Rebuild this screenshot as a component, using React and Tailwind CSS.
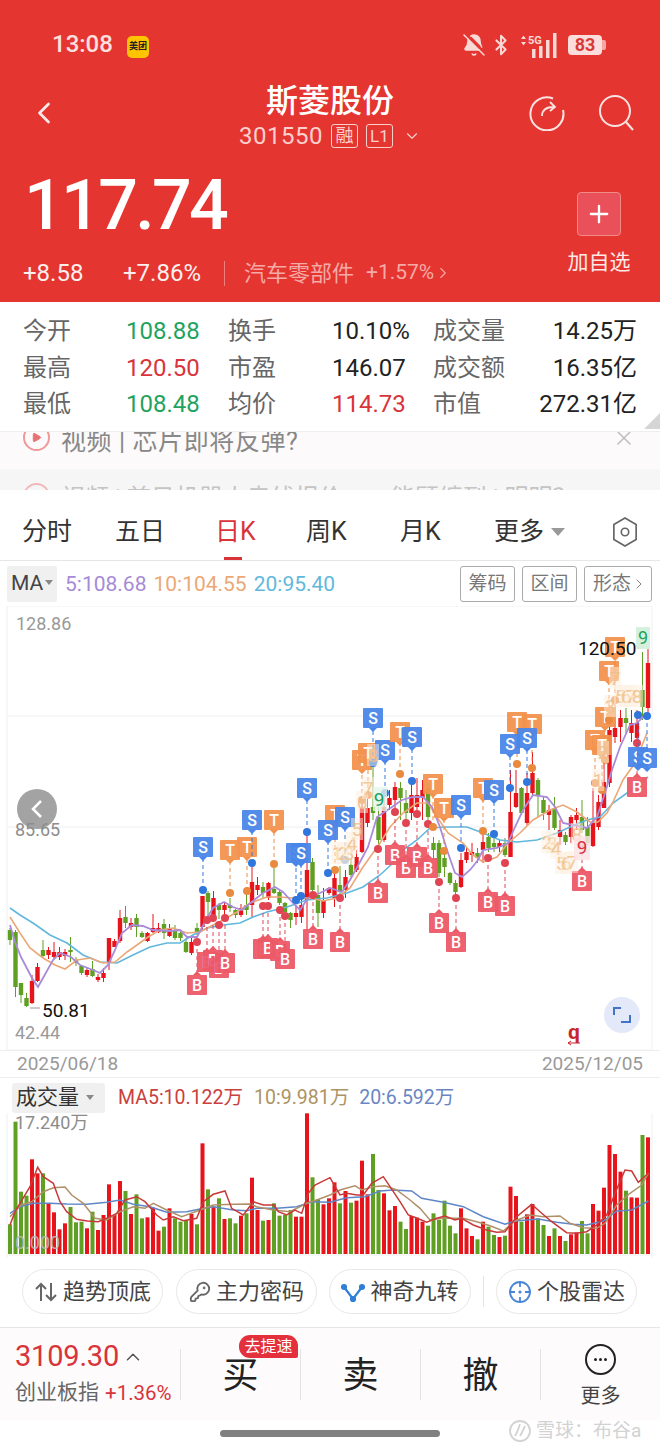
import { BellOff, Bluetooth, ChevronDown, ChevronLeft, ChevronRight, ChevronUp, KeyRound, Plus, Play, X } from "lucide-react";

const RED = "#e8141c";
const GREEN = "#5f9f22";

// bar colours, shared by candles and volume
const colors =
  "ggggrrgrrr" + "rgggrgrrrr" + "rgrggrrrgr" + "gggrgrgrgr" + "ggrgrrgrgg" + "ggrrrggrrr" + "grgrrrggrr" + "rggrrrgggg" + "ggrrrgrggr" + "grrgrrggrg" + "rgrrggrrrr" + "rrgrrgr";

const volTops = [
  358, 50, 260, 272, 163, 205, 205, 295, 322, 373, 355, 306, 352, 350, 370, 320, 375, 330, 238, 330, 228, 258, 327, 268, 340, 337, 308, 377, 365, 310,
  340, 350, 345, 327, 358, 115, 253, 305, 280, 342, 340, 355, 332, 325, 218, 315, 347, 345, 295, 332, 330, 315, 335, 335, 25, 217, 283, 298, 280, 232,
  295, 258, 293, 287, 167, 268, 147, 255, 265, 316, 303, 350, 372, 333, 338, 350, 362, 325, 345, 287, 362, 385, 310, 370, 393, 403, 350, 365, 390, 396,
  392, 245, 273, 350, 328, 297, 340, 360, 393, 370, 393, 408, 388, 382, 348, 385, 297, 317, 248, 120, 147, 200, 257, 277, 278, 90, 97,
];

// body top, body bottom, high, low
const candles = [
  [930, 940, 928, 945], [932, 987, 930, 997], [983, 995, 983, 1003], [998, 1006, 993, 1007], [981, 1003, 975, 1004], [967, 981, 963, 982],
  [950, 956, 940, 957], [950, 955, 947, 959], [952, 957, 942, 959], [952, 957, 947, 960], [952, 956, 949, 960], [950, 952, 937, 962],
  [960, 963, 957, 966], [966, 973, 966, 975], [970, 975, 968, 977], [969, 976, 961, 977], [977, 980, 974, 982], [973, 978, 968, 982],
  [938, 963, 938, 970], [941, 947, 939, 947], [918, 941, 910, 943], [917, 923, 906, 928], [923, 927, 918, 930], [918, 927, 914, 937],
  [933, 937, 931, 938], [933, 941, 932, 942], [928, 932, 914, 933], [928, 932, 923, 933], [924, 933, 919, 939], [928, 936, 924, 937],
  [930, 938, 925, 940], [933, 938, 930, 941], [942, 952, 938, 953], [942, 953, 935, 955], [928, 933, 923, 935], [896, 927, 896, 930],
  [893, 902, 891, 917], [898, 918, 891, 920], [905, 910, 903, 919], [905, 910, 902, 920], [905, 908, 898, 912], [910, 915, 909, 918],
  [908, 915, 904, 917], [905, 910, 887, 915], [882, 905, 865, 917], [885, 890, 877, 895], [887, 893, 882, 898], [883, 898, 882, 900],
  [889, 893, 868, 894], [892, 903, 890, 905], [903, 912, 902, 913], [913, 920, 912, 928], [913, 917, 905, 925], [905, 917, 898, 923],
  [870, 900, 835, 930], [862, 890, 858, 893], [895, 913, 885, 927], [900, 913, 888, 918], [888, 893, 887, 895], [878, 898, 867, 907],
  [885, 892, 866, 895], [877, 890, 870, 898], [865, 875, 858, 877], [857, 870, 850, 872], [808, 852, 800, 853], [808, 823, 797, 827],
  [807, 813, 763, 820], [817, 840, 807, 850], [807, 840, 790, 842], [798, 805, 790, 810], [787, 800, 782, 813], [788, 798, 782, 820],
  [803, 813, 790, 820], [795, 813, 778, 820], [795, 807, 778, 812], [790, 798, 780, 820], [788, 817, 783, 827], [843, 850, 837, 860],
  [843, 873, 840, 877], [858, 867, 850, 877], [873, 883, 872, 885], [883, 892, 880, 895], [860, 887, 853, 888], [852, 860, 848, 863],
  [852, 855, 843, 862], [853, 858, 848, 863], [842, 850, 833, 863], [837, 848, 833, 852], [843, 847, 838, 852], [843, 847, 840, 852],
  [843, 855, 838, 857], [812, 857, 770, 857], [793, 807, 770, 808], [788, 813, 787, 815], [793, 823, 773, 825], [773, 793, 752, 795],
  [780, 795, 778, 817], [800, 813, 797, 820], [810, 815, 805, 830], [808, 828, 797, 830], [830, 837, 820, 845], [835, 842, 832, 845],
  [817, 837, 815, 843], [815, 820, 808, 830], [817, 830, 800, 833], [827, 843, 817, 845], [823, 846, 788, 847], [802, 827, 795, 830],
  [782, 808, 762, 808], [730, 783, 720, 787], [728, 737, 697, 743], [718, 727, 710, 742], [718, 723, 708, 733], [723, 733, 710, 742],
  [723, 738, 710, 747], [690, 707, 652, 720], [663, 708, 648, 717],
];

const ma5 =
  "10,925 15,942 21,957 32,978 38,987 43,978 53,960 60,953 71,957 80,965 93,970 100,973 108,965 115,950 122,933 132,925 143,926 153,930 170,931 180,930 187,937 197,937 207,918 213,908 224,902 233,907 242,910 248,905 263,893 275,887 283,892 293,903 300,910 308,898 320,893 330,888 342,892 350,880 360,862 368,847 377,817 392,807 402,800 413,797 423,797 432,807 440,827 447,850 455,873 462,877 470,870 478,860 483,850 497,848 508,843 515,827 523,810 533,795 547,797 555,807 563,823 573,825 587,828 597,817 605,793 612,770 620,747 630,725 637,723 645,715";
const ma10 =
  "10,917 20,933 30,948 43,958 55,965 65,969 77,960 90,958 103,963 115,962 127,952 137,945 148,937 160,930 173,928 187,933 200,932 213,925 223,920 237,912 250,903 267,897 280,897 293,898 310,898 323,901 337,898 350,888 363,867 380,843 390,827 403,813 417,803 428,803 437,817 448,833 463,843 473,855 483,862 497,857 508,843 520,833 533,820 550,810 563,805 577,812 590,822 598,822 607,813 613,802 623,780 635,763 647,733";
const ma20 =
  "10,908 20,915 33,923 50,935 67,943 83,955 100,962 117,963 133,955 150,947 167,943 180,943 193,935 207,928 223,925 240,923 253,917 267,912 287,907 307,900 327,898 347,893 363,887 380,875 393,863 403,850 417,840 430,828 445,827 467,827 483,833 500,840 517,842 537,840 557,833 570,827 587,820 600,817 613,803 627,793 648,777";

const markers = [
  ["B", 197, 985, 942], ["B", 207, 962, 920], ["B", 213, 960, 918], ["B", 219, 968, 925], ["B", 225, 963, 918],
  ["B", 263, 949, 906], ["B", 268, 948, 906], ["B", 280, 951, 910], ["B", 285, 959, 916], ["B", 313, 939, 895], ["B", 340, 942, 898],
  ["B", 378, 893, 849], ["B", 395, 855, 812], ["B", 406, 868, 823], ["B", 417, 857, 814], ["B", 428, 868, 824], ["B", 439, 923, 882],
  ["B", 456, 942, 898], ["B", 488, 902, 858], ["B", 505, 906, 863], ["B", 582, 881, 845], ["B", 637, 787, 743],
  ["S", 203, 847, 890], ["T", 230, 850, 893], ["T", 247, 847, 891], ["S", 252, 820, 863], ["T", 274, 820, 864], ["S", 307, 788, 832],
  ["S", 296, 853, 900], ["S", 301, 853, 896], ["T", 335, 815, 870], ["S", 328, 830, 873], ["S", 345, 817, 860],
  ["T", 362, 760, 800], ["T", 368, 753, 795], ["S", 373, 718, 763], ["S", 385, 750, 793], ["T", 400, 732, 774], ["S", 412, 737, 781],
  ["T", 433, 784, 827], ["T", 444, 808, 851], ["S", 461, 805, 848], ["T", 483, 788, 831], ["S", 494, 790, 834],
  ["T", 517, 722, 764], ["T", 532, 724, 768], ["S", 510, 744, 788], ["S", 527, 738, 782],
  ["T", 595, 740, 783], ["T", 602, 745, 790], ["T", 605, 717, 760], ["T", 609, 671, 720], ["T", 615, 647, 700],
  ["S", 638, 757, 715], ["S", 647, 758, 716],
];

const tagColors = {
  S: { fill: "#4a86e8", dot: "#2f76dd" },
  T: { fill: "#f2924d", dot: "#e98a3e" },
  B: { fill: "#ec5a66", dot: "#e04352" },
};

// pale sequence numbers sitting on the chart
const seq = [
  [337, 853, "1"], [343, 853, "2"], [349, 853, "3"], [352, 843, "4"], [357, 829, "5"], [362, 802, "6"], [368, 788, "7"], [373, 755, "8"],
  [547, 842, "2"], [552, 843, "3"], [556, 848, "4"], [561, 863, "5"], [566, 863, "6"], [572, 862, "7"], [577, 834, "8"],
  [598, 780, "1"], [603, 752, "2"], [610, 706, "3"], [620, 696, "5"], [626, 696, "6"], [615, 678, "7"], [631, 696, "7"], [637, 696, "8"],
];

function Marker({ type, x, y, dot }) {
  const c = tagColors[type];
  const isBuy = type === "B";
  return (
    <g>
      <line x1={x} x2={x} y1={dot} y2={isBuy ? y - 13 : y + 13} stroke={c.dot} strokeWidth="1.2" strokeDasharray="4 3" opacity="0.8" />
      <circle cx={x} cy={dot} r="4" fill={c.dot} />
      <rect x={x - 10} y={y - 10} width="20" height="20" fill={c.fill} rx="1" opacity="0.95" />
      <path d={isBuy ? `M${x - 4} ${y - 10}L${x} ${y - 14}L${x + 4} ${y - 10}Z` : `M${x - 4} ${y + 10}L${x} ${y + 14}L${x + 4} ${y + 10}Z`} fill={c.fill} />
      <text x={x} y={y + 6} textAnchor="middle" fontSize="16" fontWeight="500" fill="#fff">
        {type}
      </text>
    </g>
  );
}

function PriceChart() {
  return (
    <svg viewBox="0 606 660 444" className="block w-[660px] h-[444px]">
      <rect x="7" y="606" width="645" height="444" fill="none" stroke="#f0f0f0" />
      <line x1="7" x2="652" y1="716" y2="716" stroke="#eeeeee" />
      <line x1="7" x2="652" y1="827" y2="827" stroke="#eeeeee" />

      <text x="16" y="630" fontSize="18" fill="#999999">128.86</text>
      <circle cx="37" cy="809" r="20" fill="#a3a3a3" />
      <path d="M41 801L33 809L41 817" fill="none" stroke="#fff" strokeWidth="2.5" />
      <text x="15" y="836" fontSize="18" fill="#8c8c8c">85.65</text>
      <text x="15" y="1039" fontSize="18" fill="#999999">42.44</text>

      {candles.map(([top, bottom, high, low], i) => {
        const x = 10 + i * 5.5;
        const fill = colors[i] === "r" ? RED : GREEN;
        return (
          <g key={i}>
            <line x1={x} x2={x} y1={high} y2={low} stroke={fill} strokeWidth="1" />
            <rect x={x - 2.2} y={top} width="4.4" height={bottom - top} fill={fill} />
          </g>
        );
      })}

      <polyline points={ma20} fill="none" stroke="#62b8dc" strokeWidth="1.6" />
      <polyline points={ma10} fill="none" stroke="#eba877" strokeWidth="1.6" />
      <polyline points={ma5} fill="none" stroke="#a98bd9" strokeWidth="1.8" />

      {markers.map(([type, x, y, dot], i) => (
        <Marker key={i} type={type} x={x} y={y} dot={dot} />
      ))}

      {seq.map(([x, y, n], i) => (
        <g key={i}>
          <rect x={x - 6} y={y - 11} width="12" height="22" fill="#fdf0e0" opacity="0.5" />
          <text x={x} y={y + 7} textAnchor="middle" fontSize="19" fill="#efc08a" opacity="0.85">{n}</text>
        </g>
      ))}
      <rect x="373" y="787" width="14" height="24" fill="#e3f5ea" opacity="0.8" />
      <text x="379" y="806" textAnchor="middle" fontSize="19" fill="#1ea35c">9</text>
      <rect x="574" y="836" width="16" height="24" fill="#fbe3e5" opacity="0.85" />
      <text x="582" y="854" textAnchor="middle" fontSize="19" fill="#d8333f">9</text>
      <rect x="636" y="627" width="14" height="22" fill="#d5f0df" />
      <text x="643" y="644" textAnchor="middle" fontSize="18" fill="#1ea35c">9</text>

      <text x="578" y="655" fontSize="19" fill="#111111">120.50</text>
      <line x1="30" x2="40" y1="1008" y2="1008" stroke="#999999" />
      <text x="42" y="1017" fontSize="19" fill="#111111">50.81</text>

      <text x="574" y="1039" textAnchor="middle" fontSize="21" fontWeight="700" fill="#c8252c">q</text>
      <path d="M568 1043H580M568 1043L571 1041M568 1043L571 1045" stroke="#c8252c" fill="none" />
      <circle cx="622" cy="1015" r="18" fill="#e3e9f8" />
      <path d="M614 1015V1008H621M630 1015V1022H621" fill="none" stroke="#3f74c9" strokeWidth="2" />
    </svg>
  );
}

const volMa5 =
  "30,360 45,320 63,290 90,245 113,187 130,215 160,235 180,290 200,320 230,343 262,348 295,350 320,340 350,325 375,285 410,275 435,290 470,330 490,345 520,335 550,347 590,340 610,290 640,268 675,258 695,310 730,330 760,290 790,300 822,300 835,320 860,330 885,315 905,325 925,265 945,240 990,218 1020,270 1040,265 1070,270 1090,270 1115,235 1150,215 1170,245 1200,290 1225,330 1252,340 1280,352 1310,340 1335,333 1365,345 1385,340 1420,360 1460,375 1490,382 1515,380 1550,335 1595,298 1620,320 1655,350 1700,383 1730,385 1760,380 1790,360 1820,330 1845,265 1875,195 1895,198 1915,232 1945,205";
const volMa10 =
  "30,335 63,300 95,290 130,260 160,248 195,246 215,270 250,295 285,340 320,345 360,320 400,305 435,310 460,295 500,315 545,335 600,315 640,300 700,298 750,297 770,305 820,315 870,320 920,295 950,285 990,270 1020,255 1065,242 1085,255 1120,245 1155,242 1190,255 1230,285 1260,310 1290,345 1330,340 1390,340 1430,350 1470,362 1510,378 1545,348 1590,330 1630,335 1680,333 1710,355 1750,368 1790,370 1815,355 1850,300 1890,265 1925,240 1945,205";
const volMa20 =
  "30,325 60,305 100,295 150,295 200,297 260,298 320,292 360,285 400,298 450,305 500,322 560,320 600,312 640,305 700,315 740,317 770,310 830,310 890,305 935,290 990,292 1040,278 1095,275 1140,258 1180,255 1235,258 1265,280 1330,292 1390,305 1450,335 1515,358 1545,348 1615,342 1670,352 1720,358 1760,360 1810,348 1850,318 1895,315 1945,288";

// zoom points are in 3x crop units, starting at y=1105
const toPage = (pts) =>
  pts
    .split(" ")
    .map((p) => {
      const [x, y] = p.split(",").map(Number);
      return `${(x / 3).toFixed(1)},${(1105 + y / 3).toFixed(1)}`;
    })
    .join(" ");

function VolumeChart() {
  return (
    <svg viewBox="0 1113 660 145" className="block w-[660px] h-[145px]">
      <line x1="7" x2="7" y1="1113" y2="1258" stroke="#f0f0f0" />
      <line x1="652" x2="652" y1="1113" y2="1258" stroke="#f0f0f0" />
      <line x1="7" x2="652" y1="1255" y2="1255" stroke="#eeeeee" />
      {volTops.map((t, i) => {
        const top = 1105 + t / 3;
        return <rect key={i} x={8 + i * 5.5} y={top} width="4" height={1254 - top} fill={colors[i] === "r" ? RED : GREEN} />;
      })}
      <polyline points={toPage(volMa20)} fill="none" stroke="#5f86c8" strokeWidth="1.5" />
      <polyline points={toPage(volMa10)} fill="none" stroke="#b09068" strokeWidth="1.5" />
      <polyline points={toPage(volMa5)} fill="none" stroke="#c73a38" strokeWidth="1.5" />
      <text x="15" y="1129" fontSize="18" fill="#8c8c8c">17.240万</text>
      <text x="15" y="1249" fontSize="18" fill="#b9b9b9" opacity="0.9">0.000</text>
    </svg>
  );
}

function ShareIcon() {
  return (
    <svg viewBox="0 0 36 36" className="w-[36px] h-[36px]" fill="none" stroke="#fbe3e1" strokeWidth="2">
      <path d="M24 3.5A16.5 16.5 0 1 0 34 15" />
      <path d="M13 21C13 15 17 12 25 12M21 7L26 12L21 16" strokeWidth="1.8" />
    </svg>
  );
}

function SearchIcon() {
  return (
    <svg viewBox="0 0 36 36" className="w-[36px] h-[36px]" fill="none" stroke="#fbe3e1" strokeWidth="2">
      <circle cx="17" cy="16" r="15" />
      <path d="M28 27L35 35" />
    </svg>
  );
}

function SignalIcon() {
  return (
    <svg viewBox="0 0 40 26" className="w-[40px] h-[26px]" fill="#f9d9d6">
      <path d="M3 7L5.5 3.5L8 7ZM3 10L5.5 13.5L8 10Z" />
      <text x="10" y="12" fontSize="11" fontWeight="700">5G</text>
      <rect x="14" y="17" width="3.5" height="9" />
      <rect x="21" y="14" width="3.5" height="12" />
      <rect x="28" y="8" width="3.5" height="18" />
      <rect x="35" y="1" width="3.5" height="25" />
    </svg>
  );
}

function Header() {
  return (
    <div className="h-[302px] bg-[#e53531] flex flex-col text-white">
      <div className="h-[79px] flex items-end pb-[21px] pl-[52px] pr-[54px]">
        <span className="text-[24px] font-medium text-[#fbe0dd] leading-[28px]">13:08</span>
        <span className="ml-[14px] w-[22px] h-[22px] rounded-[5px] bg-[#ffc400] text-[#222] text-[9px] font-bold flex items-center justify-center">美团</span>
        <div className="ml-auto flex items-center">
          <BellOff className="w-[24px] h-[24px] text-[#f9d9d6]" fill="#f9d9d6" strokeWidth={1.5} />
          <Bluetooth className="ml-[4px] w-[22px] h-[24px] text-[#f9d9d6]" strokeWidth={2.2} />
          <div className="ml-[6px]">
            <SignalIcon />
          </div>
          <div className="ml-[10px] w-[34px] h-[20px] rounded-[4px] bg-[#fbdedc] text-[#d93a38] text-[18px] leading-[20px] font-bold text-center">83</div>
          <div className="w-[4px] h-[10px] rounded-r-[2px] bg-[#f3a8a4]" />
        </div>
      </div>

      <div className="h-[71px] flex items-start pl-[26px] pr-[26px]">
        <div className="w-[105px] mt-[16px]">
          <ChevronLeft className="w-[36px] h-[36px] text-[#fbe9e7]" strokeWidth={1.8} />
        </div>
        <div className="flex-1 flex flex-col items-center pt-[1px]">
          <div className="text-[32px] leading-[42px] font-medium">斯菱股份</div>
          <div className="flex items-center h-[28px] text-[#fbd0cc]">
            <span className="text-[24px] tracking-[0.5px]">301550</span>
            <span className="ml-[8px] w-[27px] h-[24px] border border-[#fbd0cc] rounded-[3px] text-[18px] leading-[22px] text-center">融</span>
            <span className="ml-[8px] w-[27px] h-[24px] border border-[#fbd0cc] rounded-[3px] text-[17px] leading-[22px] text-center">L1</span>
            <ChevronDown className="ml-[10px] w-[18px] h-[18px]" strokeWidth={1.5} />
          </div>
        </div>
        <div className="flex items-center gap-[33px] mt-[16px]">
          <ShareIcon />
          <SearchIcon />
        </div>
      </div>

      <div className="flex-1 flex pl-[23px] pr-[28px]">
        <div className="flex-1 flex flex-col">
          <div className="text-[70px] leading-[66px] font-medium tracking-[-2.7px] mt-[22px] ml-[1px]">117.74</div>
          <div className="flex items-center mt-[22px] h-[26px]">
            <span className="text-[24px] w-[100px] text-[#fbf0ee]">+8.58</span>
            <span className="text-[24px] w-[101px] text-[#fbf0ee]">+7.86%</span>
            <span className="w-px h-[25px] bg-[#ee7f7a]" />
            <span className="ml-[19px] text-[22px] text-[#f5aaa5]">汽车零部件</span>
            <span className="ml-[12px] text-[21px] text-[#f5aaa5]">+1.57%</span>
            <ChevronRight className="w-[18px] h-[20px] text-[#f5aaa5]" strokeWidth={1.5} />
          </div>
        </div>
        <div className="flex flex-col items-center mt-[42px] w-[66px]">
          <div className="w-[44px] h-[44px] rounded-[4px] border border-[#f08a85] bg-[#e9505a] flex items-center justify-center">
            <Plus className="w-[28px] h-[28px] text-white" strokeWidth={2} />
          </div>
          <span className="mt-[12px] text-[21px] leading-[28px] text-[#fde8e6]">加自选</span>
        </div>
      </div>
    </div>
  );
}

function Stats() {
  const rows = [
    ["今开", "108.88", "text-[#1fa35f]", "换手", "10.10%", "text-[#222]", "成交量", "14.25万"],
    ["最高", "120.50", "text-[#d8343a]", "市盈", "146.07", "text-[#222]", "成交额", "16.35亿"],
    ["最低", "108.48", "text-[#1fa35f]", "均价", "114.73", "text-[#d8343a]", "市值", "272.31亿"],
  ];
  return (
    <div className="relative h-[130px] pt-[11px] px-[23px] border-b border-[#eeeeee]">
      {rows.map((r) => (
        <div key={r[0]} className="h-[36.5px] grid grid-cols-[103px_102px_104px_101px_1fr] items-center text-[24px]">
          <span className="text-[#666666]">{r[0]}</span>
          <span className={r[2]}>{r[1]}</span>
          <span className="text-[#666666]">{r[3]}</span>
          <span className={r[5]}>{r[4]}</span>
          <span className="flex justify-between">
            <span className="text-[#666666]">{r[6]}</span>
            <span className="text-[#222] whitespace-nowrap">{r[7]}</span>
          </span>
        </div>
      ))}
      <div className="absolute right-0 bottom-[2px] w-0 h-0 border-l-[16px] border-l-transparent border-b-[16px] border-b-[#d5d5d5]" />
    </div>
  );
}

function News() {
  return (
    <div className="h-[58px] overflow-hidden">
      <div className="h-[38px] bg-[#fcfafa] flex items-start -mt-px pl-[23px] pr-[24px]">
        <div className="-mt-[7px] w-[27px] h-[27px] rounded-full border-2 border-[#ef9a9a] flex items-center justify-center">
          <Play className="w-[11px] h-[11px] text-[#e57373]" fill="#e57373" />
        </div>
        <span className="ml-[11px] text-[25px] tracking-[0.6px] leading-[20px] text-[#888888] mt-[-2px] pt-[3px]">视频 | 芯片即将反弹?</span>
        <X className="ml-auto -mt-[5px] w-[24px] h-[24px] text-[#bdbdbd]" strokeWidth={1.5} />
      </div>
      <div className="h-[21px] bg-[#f7f6f6] flex items-start pl-[23px] pr-[24px]">
        <div className="mt-[14px] w-[27px] h-[27px] rounded-full border-2 border-[#f2b8b8] shrink-0" />
        <span className="ml-[11px] mt-[14px] text-[24px] leading-[30px] text-[#c4c4c4] whitespace-nowrap">视频 | 首日机器人走线报价，一能顾缠到 | 明明？</span>
      </div>
    </div>
  );
}

function Tabs() {
  const tabs = [
    ["分时", "w-[93px] text-[#333333]"],
    ["五日", "w-[100px] text-[#333333]"],
    ["日K", "w-[91px] text-[#d8343a]"],
    ["周K", "w-[94px] text-[#333333]"],
    ["月K", "w-[94px] text-[#333333]"],
  ];
  return (
    <div className="h-[71px] border-b border-[#e6e6e6] pl-[22px] pr-[22px] relative">
      <div className="flex items-center h-full pt-[13px] text-[25px] text-[#333333] w-full">
        {tabs.map(([t, cls]) => (
          <span key={t} className={cls}>
            {t}
          </span>
        ))}
        <span>更多</span>
        <span className="ml-[7px] w-0 h-0 border-x-[7px] border-x-transparent border-t-[8px] border-t-[#999999]" />
        <svg viewBox="0 0 28 34" className="ml-auto w-[26px] h-[32px]" fill="none" stroke="#666666" strokeWidth="1.8">
          <path d="M14 2L26 9V25L14 32L2 25V9Z" />
          <circle cx="14" cy="17" r="4" />
        </svg>
      </div>
      <span className="absolute left-[224px] bottom-0 w-[18px] h-[3px] bg-[#d8343a]" />
    </div>
  );
}

function MaBar() {
  return (
    <div className="h-[45px] flex items-start pt-[5px] pl-[7px] pr-[8px]">
      <div className="w-[50px] h-[36px] bg-[#f0f0f0] rounded-[2px] flex items-center pl-[4px] text-[21px] text-[#444444]">
        MA
        <span className="ml-[2px] mb-[4px] w-0 h-0 border-x-[4px] border-x-transparent border-t-[5px] border-t-[#888888]" />
      </div>
      <div className="ml-[8px] h-[36px] pt-[2px] flex items-center gap-[7px] text-[21px]">
        <span className="text-[#a58bd6]">5:108.68</span>
        <span className="text-[#eba877]">10:104.55</span>
        <span className="text-[#62b8dc]">20:95.40</span>
      </div>
      <div className="ml-auto flex gap-[7px] text-[#777777] text-[19px]">
        <span className="w-[55px] h-[36px] border border-[#aaaaaa] rounded-[3px] flex items-center justify-center">筹码</span>
        <span className="w-[55px] h-[36px] border border-[#aaaaaa] rounded-[3px] flex items-center justify-center">区间</span>
        <span className="w-[68px] h-[36px] border border-[#aaaaaa] rounded-[3px] flex items-center justify-center">
          形态
          <ChevronRight className="w-[16px] h-[20px] -mr-[4px]" strokeWidth={1.4} />
        </span>
      </div>
    </div>
  );
}

function Pills() {
  const base = "h-[45px] rounded-full border border-[#e8e8e8] flex items-center justify-center gap-[5px] text-[22px] text-[#444444]";
  return (
    <div className="h-[70px] flex items-start pt-[11px] pl-[22px] border-b border-[#e6e6e6]">
      <div className={base + " w-[141px]"}>
        <svg viewBox="0 0 24 24" className="w-[24px] h-[24px]" fill="none" stroke="#666666" strokeWidth="2">
          <path d="M7 21V4M2 9L7 4L12 9M17 3V20M12 15L17 20L22 15" />
        </svg>
        趋势顶底
      </div>
      <div className={base + " w-[141px] ml-[13px]"}>
        <KeyRound className="w-[22px] h-[22px] text-[#666666]" strokeWidth={2} />
        主力密码
      </div>
      <div className={base + " w-[142px] ml-[12px]"}>
        <svg viewBox="0 0 24 24" className="w-[24px] h-[24px]" fill="none" stroke="#2f7fd6" strokeWidth="2.2">
          <path d="M3 7L12 19L21 7" />
          <circle cx="3" cy="7" r="2" fill="#2f7fd6" />
          <circle cx="21" cy="7" r="2" fill="#2f7fd6" />
          <circle cx="12" cy="19" r="2" fill="#2f7fd6" />
        </svg>
        神奇九转
      </div>
      <span className="w-px h-[31px] bg-[#e3e3e3] ml-[12px] mt-[7px]" />
      <div className={base + " w-[141px] ml-[12px]"}>
        <svg viewBox="0 0 24 24" className="w-[24px] h-[24px]" fill="none" stroke="#4a86d8" strokeWidth="1.8">
          <circle cx="12" cy="12" r="10" />
          <path d="M12 1V7M12 17V23M1 12H7M17 12H23" />
          <circle cx="12" cy="12" r="1.6" fill="#4a86d8" stroke="none" />
        </svg>
        个股雷达
      </div>
    </div>
  );
}

function BottomBar() {
  const sep = "w-px h-[51px] bg-[#e4e2e2] mt-[21px]";
  const action = "w-[119px] h-full flex items-center justify-center text-[36px] text-[#222222] pt-[4px]";
  return (
    <div className="h-[92px] bg-[#fdfbfc] flex items-start">
      <div className="w-[180px] shrink-0 pl-[15px] pt-[11px]">
        <div className="flex items-center h-[36px]">
          <span className="text-[29px] text-[#d8343a] tracking-[-0.2px]">3109.30</span>
          <ChevronUp className="ml-[3px] w-[22px] h-[22px] text-[#555555]" strokeWidth={1.6} />
        </div>
        <div className="flex items-center h-[36px] whitespace-nowrap">
          <span className="text-[21px] text-[#666666]">创业板指</span>
          <span className="ml-[6px] text-[20.5px] text-[#d8343a]">+1.36%</span>
        </div>
      </div>
      <span className={sep} />
      <div className={"relative " + action}>
        买
        <span className="absolute left-[58px] top-[7px] w-[59px] h-[23px] rounded-t-[11px] rounded-bl-[11px] rounded-br-[2px] bg-[#e4303c] text-white text-[16px] leading-[23px] text-center">去提速</span>
      </div>
      <span className={sep} />
      <div className={action}>卖</div>
      <span className={sep} />
      <div className={action}>撤</div>
      <span className={sep} />
      <div className="flex-1 flex flex-col items-center pt-[16px]">
        <div className="w-[31px] h-[31px] rounded-full border-2 border-[#222222] flex items-center justify-center gap-[2px]">
          <span className="w-[3px] h-[3px] rounded-full bg-[#222222]" />
          <span className="w-[3px] h-[3px] rounded-full bg-[#222222]" />
          <span className="w-[3px] h-[3px] rounded-full bg-[#222222]" />
        </div>
        <span className="mt-[7px] text-[20px] leading-[28px] text-[#444444]">更多</span>
      </div>
    </div>
  );
}

export default function App() {
  return (
    <div className="w-[660px] h-[1450px] bg-white overflow-hidden [font-family:Roboto,'Noto_Sans_CJK_SC',sans-serif]">
      <Header />
      <Stats />
      <News />
      <Tabs />
      <MaBar />
      <PriceChart />
      <div className="h-[28px] flex items-center justify-between pl-[17px] pr-[17px] border-y border-[#eeeeee] text-[19px] text-[#999999]">
        <span>2025/06/18</span>
        <span>2025/12/05</span>
      </div>
      <div className="h-[35px] flex items-center pt-[4px] pl-[12px] text-[19.5px]">
        <div className="w-[93px] h-[30px] bg-[#f0f0f0] rounded-[3px] flex items-center pl-[4px] text-[21px] text-[#333333]">
          成交量
          <span className="ml-[7px] w-0 h-0 border-x-[4px] border-x-transparent border-t-[5px] border-t-[#888888]" />
        </div>
        <span className="ml-[13px] text-[#c9403e]">MA5:10.122万</span>
        <span className="ml-[11px] text-[#ad9363]">10:9.981万</span>
        <span className="ml-[10px] text-[#6a87c4]">20:6.592万</span>
      </div>
      <VolumeChart />
      <Pills />
      <BottomBar />
      <div className="relative h-[30px]">
        <span className="absolute left-[220px] top-[10px] w-[220px] h-[7px] rounded-full bg-[#808080]" />
        <div className="absolute left-[508px] -top-[3px] flex items-center text-[19px] text-[#d2d2d2]">
          <svg viewBox="0 0 24 24" className="w-[24px] h-[24px] mr-[4px]" fill="none" stroke="#d2d2d2" strokeWidth="1.8">
            <circle cx="12" cy="12" r="10" />
            <path d="M7 17C10 12 11 8 12 5M12 17C15 12 16 9 17 7" />
          </svg>
          雪球：布谷a
        </div>
      </div>
    </div>
  );
}
